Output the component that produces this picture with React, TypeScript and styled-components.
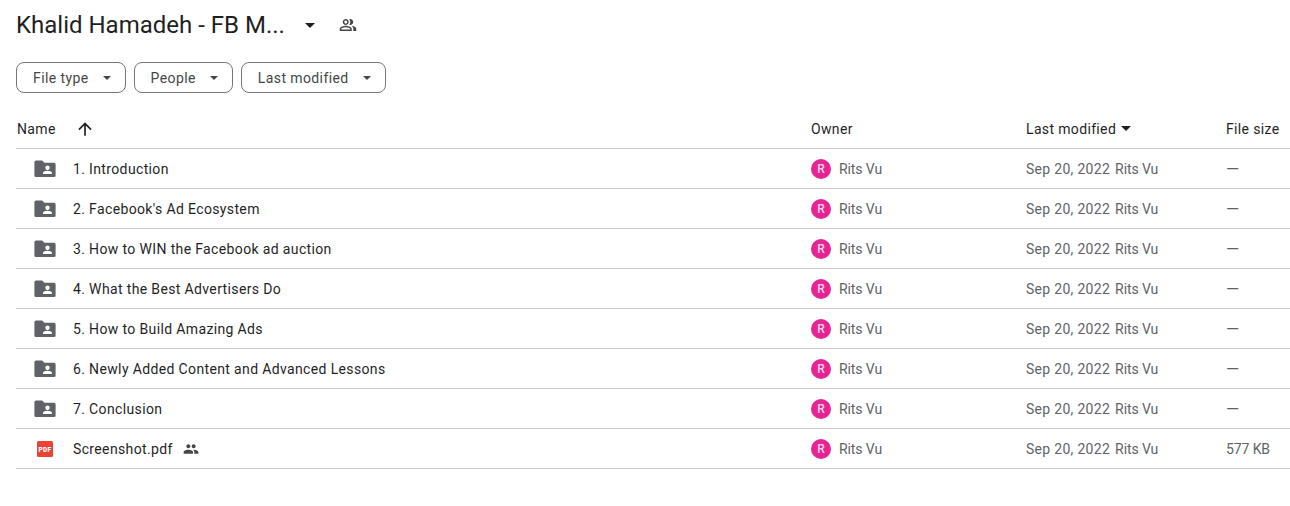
import styled, { createGlobalStyle } from 'styled-components'

const GlobalStyle = createGlobalStyle`
  html, body {
    margin: 0;
    padding: 0;
    background: #fff;
    font-family: Roboto, "Noto Sans", sans-serif;
  }
`

const Page = styled.div`
  width: 1290px;
  height: 506px;
  padding: 0 0 0 16px;
  box-sizing: border-box;
  overflow: hidden;
`

const TitleBar = styled.div`
  display: flex;
  align-items: center;
  height: 50px;
`

const Title = styled.h1`
  margin: 0;
  width: 276px;
  font-size: 24px;
  font-weight: 400;
  color: #1f1f1f;
  white-space: nowrap;
`

const TitleCaret = styled.span`
  width: 0;
  height: 0;
  margin-left: 13px;
  border-left: 5px solid transparent;
  border-right: 5px solid transparent;
  border-top: 5px solid #1f1f1f;
`

const SharedIcon = styled.svg`
  margin-left: 24px;
  fill: #444746;
`

const Filters = styled.div`
  display: flex;
  gap: 8px;
  margin-top: 12px;
`

const Chip = styled.button`
  display: flex;
  align-items: center;
  height: 31px;
  padding: 0 14px 0 16px;
  box-sizing: border-box;
  background: #fff;
  border: 1px solid #747775;
  border-radius: 8px;
  font-family: inherit;
  font-size: 14px;
  letter-spacing: 0.4px;
  color: #444746;
`

const ChipCaret = styled.span`
  width: 0;
  height: 0;
  margin-left: 14px;
  border-left: 4px solid transparent;
  border-right: 4px solid transparent;
  border-top: 4px solid #444746;
`

const Table = styled.div`
  width: 1274px;
  margin-top: 16px;
`

const columns = '795px 215px 200px 64px'

const HeaderRow = styled.div`
  display: grid;
  grid-template-columns: ${columns};
  align-items: center;
  height: 40px;
  border-bottom: 1px solid #c7c7c7;
  box-sizing: border-box;
  font-size: 14px;
  letter-spacing: 0.35px;
  color: #1f1f1f;
`

const HeaderCell = styled.div`
  display: flex;
  align-items: center;
  white-space: nowrap;
`

const NameHeader = styled(HeaderCell)`
  padding-left: 1px;
`

const SortArrow = styled.svg`
  margin-left: 19px;
  fill: #1f1f1f;
`

const SortCaret = styled.span`
  width: 0;
  height: 0;
  margin-left: 5px;
  border-left: 5px solid transparent;
  border-right: 5px solid transparent;
  border-top: 5px solid #1f1f1f;
`

const Row = styled.div`
  display: grid;
  grid-template-columns: ${columns};
  align-items: center;
  height: 40px;
  border-bottom: 1px solid #c7c7c7;
  box-sizing: border-box;
  font-size: 14px;
  letter-spacing: -0.1px;
  color: #5f6368;
`

const NameCell = styled.div`
  display: flex;
  align-items: center;
  color: #1f1f1f;
  letter-spacing: 0.36px;
  white-space: nowrap;
`

const IconSlot = styled.div`
  display: flex;
  justify-content: center;
  width: 57px;
  box-sizing: border-box;
`

const OwnerCell = styled.div`
  display: flex;
  align-items: center;
  gap: 8px;
`

const Avatar = styled.span`
  display: flex;
  align-items: center;
  justify-content: center;
  width: 20px;
  height: 20px;
  border-radius: 50%;
  background: #e52592;
  color: #fbd3e8;
  font-size: 12px;
  font-weight: 500;
`

const ModifiedCell = styled.div`
  display: flex;
  gap: 5px;
  white-space: nowrap;
`

const DateText = styled.span`
  letter-spacing: 0.3px;
`

const SizeCell = styled.div`
  white-space: nowrap;
`

const Dash = styled.span`
  display: inline-block;
  transform: scaleX(1.2);
  transform-origin: left center;
`

const SharedMark = styled.svg`
  margin-left: 10px;
  fill: #444746;
`

const FolderIcon = () => (
  <svg width="24" height="24" viewBox="0 0 24 24" fill="#5f6368">
    <path d="M3 3.5h6.2l2.2 2.2H21a1.6 1.6 0 0 1 1.6 1.6v11.1A1.6 1.6 0 0 1 21 20H3a1.6 1.6 0 0 1-1.6-1.6V5.1A1.6 1.6 0 0 1 3 3.5z" />
    <circle cx="14.5" cy="10.7" r="2.2" fill="#fff" />
    <path d="M10 17v-1c0-1.6 3.1-2.3 4.5-2.3s4.5.7 4.5 2.3v1z" fill="#fff" />
  </svg>
)

const PdfIcon = () => (
  <svg width="16" height="16" viewBox="0 0 16 16">
    <rect width="16" height="16" rx="1.5" fill="#ea4335" />
    <text
      x="8"
      y="10.6"
      textAnchor="middle"
      fontFamily="Roboto, sans-serif"
      fontSize="6.4"
      fontWeight="900"
      fill="#fff"
    >
      PDF
    </text>
  </svg>
)

const peoplePath =
  'M16 11c1.66 0 2.99-1.34 2.99-3S17.66 5 16 5s-3 1.34-3 3 1.34 3 3 3zm-8 0c1.66 0 2.99-1.34 2.99-3S9.66 5 8 5 5 6.34 5 8s1.34 3 3 3zm0 2c-2.33 0-7 1.17-7 3.5V19h14v-2.5C15 14.17 10.33 13 8 13zm8 0c-.29 0-.62.02-.97.05 1.16.84 1.97 1.97 1.97 3.45V19h6v-2.5c0-2.33-4.67-3.5-7-3.5z'

const items = [
  '1. Introduction',
  "2. Facebook's Ad Ecosystem",
  '3. How to WIN the Facebook ad auction',
  '4. What the Best Advertisers Do',
  '5. How to Build Amazing Ads',
  '6. Newly Added Content and Advanced Lessons',
  '7. Conclusion',
]

const Owner = () => (
  <OwnerCell>
    <Avatar>R</Avatar>
    Rits Vu
  </OwnerCell>
)

const Modified = () => (
  <ModifiedCell>
    <DateText>Sep 20, 2022</DateText>
    <span>Rits Vu</span>
  </ModifiedCell>
)

export default function App() {
  return (
    <Page>
      <GlobalStyle />
      <TitleBar>
        <Title>Khalid Hamadeh - FB M...</Title>
        <TitleCaret />
        <SharedIcon width="18" height="18" viewBox="0 0 24 24">
          <path d="M16.67 13.13C18.04 14.06 19 15.32 19 17v3h4v-3c0-2.18-3.57-3.47-6.33-3.87zM15 12c2.21 0 4-1.79 4-4s-1.79-4-4-4c-.47 0-.91.1-1.33.24C14.5 5.27 15 6.58 15 8s-.5 2.73-1.33 3.76c.42.14.86.24 1.33.24zM9 12c2.21 0 4-1.79 4-4s-1.79-4-4-4-4 1.79-4 4 1.79 4 4 4zm0-6c1.1 0 2 .9 2 2s-.9 2-2 2-2-.9-2-2 .9-2 2-2zm0 7c-2.67 0-8 1.34-8 4v3h16v-3c0-2.66-5.33-4-8-4zm6 5H3v-.99C3.2 16.29 6.3 15 9 15s5.8 1.29 6 2v1z" />
        </SharedIcon>
      </TitleBar>

      <Filters>
        <Chip>
          File type
          <ChipCaret />
        </Chip>
        <Chip>
          People
          <ChipCaret />
        </Chip>
        <Chip>
          Last modified
          <ChipCaret />
        </Chip>
      </Filters>

      <Table>
        <HeaderRow>
          <NameHeader>
            Name
            <SortArrow width="20" height="20" viewBox="0 0 24 24">
              <path d="M4 12l1.41 1.41L11 7.83V20h2V7.83l5.58 5.59L20 12l-8-8-8 8z" />
            </SortArrow>
          </NameHeader>
          <HeaderCell>Owner</HeaderCell>
          <HeaderCell>
            Last modified
            <SortCaret />
          </HeaderCell>
          <HeaderCell>File size</HeaderCell>
        </HeaderRow>

        {items.map((name) => (
          <Row key={name}>
            <NameCell>
              <IconSlot>
                <FolderIcon />
              </IconSlot>
              {name}
            </NameCell>
            <Owner />
            <Modified />
            <SizeCell>
              <Dash>—</Dash>
            </SizeCell>
          </Row>
        ))}

        <Row>
          <NameCell>
            <IconSlot>
              <PdfIcon />
            </IconSlot>
            Screenshot.pdf
            <SharedMark width="16" height="16" viewBox="0 0 24 24">
              <path d={peoplePath} />
            </SharedMark>
          </NameCell>
          <Owner />
          <Modified />
          <SizeCell>577 KB</SizeCell>
        </Row>
      </Table>
    </Page>
  )
}
